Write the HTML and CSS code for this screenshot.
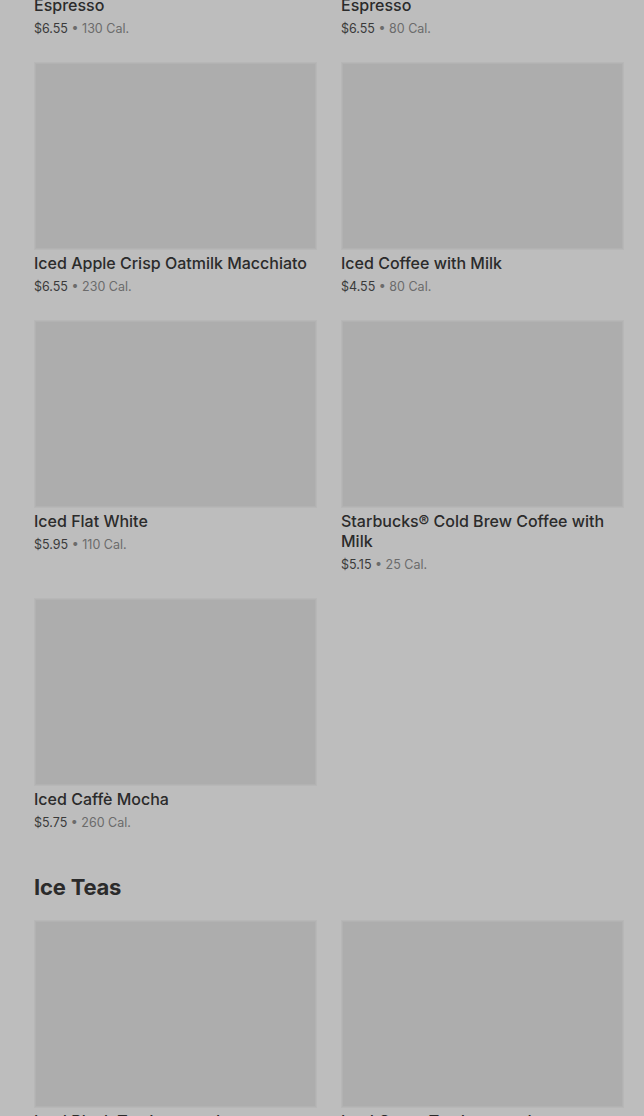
FILE: index.html
```html
<!DOCTYPE html>
<html lang="en">
<head>
<meta charset="utf-8">
<link rel="stylesheet" href="styles.css">
</head>
<body>
<main class="menu">
  <section class="section">
    <div class="grid">
      <div class="card">
        <div class="thumb"></div>
        <div class="name">Iced Brown Sugar Oatmilk Shaken Espresso</div>
        <div class="meta"><span class="price">$6.55</span> • <span class="cal">130 Cal.</span></div>
      </div>
      <div class="card">
        <div class="thumb"></div>
        <div class="name">Iced Toasted Vanilla Oatmilk Shaken Espresso</div>
        <div class="meta"><span class="price">$6.55</span> • <span class="cal">80 Cal.</span></div>
      </div>
      <div class="card">
        <div class="thumb"></div>
        <div class="name">Iced Apple Crisp Oatmilk Macchiato</div>
        <div class="meta"><span class="price">$6.55</span> • <span class="cal">230 Cal.</span></div>
      </div>
      <div class="card">
        <div class="thumb"></div>
        <div class="name">Iced Coffee with Milk</div>
        <div class="meta"><span class="price">$4.55</span> • <span class="cal">80 Cal.</span></div>
      </div>
      <div class="card">
        <div class="thumb"></div>
        <div class="name">Iced Flat White</div>
        <div class="meta"><span class="price">$5.95</span> • <span class="cal">110 Cal.</span></div>
      </div>
      <div class="card">
        <div class="thumb"></div>
        <div class="name">Starbucks® Cold Brew Coffee with Milk</div>
        <div class="meta"><span class="price">$5.15</span> • <span class="cal">25 Cal.</span></div>
      </div>
      <div class="card">
        <div class="thumb"></div>
        <div class="name">Iced Caffè Mocha</div>
        <div class="meta"><span class="price">$5.75</span> • <span class="cal">260 Cal.</span></div>
      </div>
    </div>
  </section>
  <section class="section next">
    <h2 class="heading">Ice Teas</h2>
    <div class="grid">
      <div class="card">
        <div class="thumb"></div>
        <div class="name">Iced Black Tea Lemonade</div>
        <div class="meta"><span class="price">$4.45</span> • <span class="cal">100 Cal.</span></div>
      </div>
      <div class="card">
        <div class="thumb"></div>
        <div class="name">Iced Green Tea Lemonade</div>
        <div class="meta"><span class="price">$4.45</span> • <span class="cal">90 Cal.</span></div>
      </div>
    </div>
  </section>
</main>
</body>
</html>
```
FILE: styles.css
```css
html, body {
  margin: 0;
  padding: 0;
  background: #bdbdbd;
}
body {
  font-family: Inter, "Liberation Sans", sans-serif;
  color: #2e2e2e;
  overflow: hidden;
}
.menu {
  margin-top: -216px;
  padding: 0 20px 0 34px;
}
.grid {
  display: grid;
  grid-template-columns: 283px 283px;
  column-gap: 24px;
  row-gap: 24px;
  align-items: start;
}
.card {
  display: flex;
  flex-direction: column;
}
.thumb {
  height: 188px;
  background: #adadad;
  box-shadow: inset 0 0 0 1px #b2b2b2;
  border: 1px solid #b7b7b7;
  box-sizing: border-box;
}
.name {
  margin-top: 3px;
  font-size: 16px;
  line-height: 20px;
  font-weight: 500;
  color: #2b2b2b;
}
.meta {
  margin-top: 4px;
  font-size: 12.5px;
  line-height: 19px;
  height: 19px;
  color: #6b6b6b;
}
.price {
  color: #3a3a3a;
}
.cal {
  color: #6b6b6b;
}
.next {
  padding-top: 39px;
}
.heading {
  margin: 0 0 17px;
  font-size: 22px;
  line-height: 32px;
  font-weight: 700;
  color: #2b2b2b;
  letter-spacing: -0.2px;
}
```
